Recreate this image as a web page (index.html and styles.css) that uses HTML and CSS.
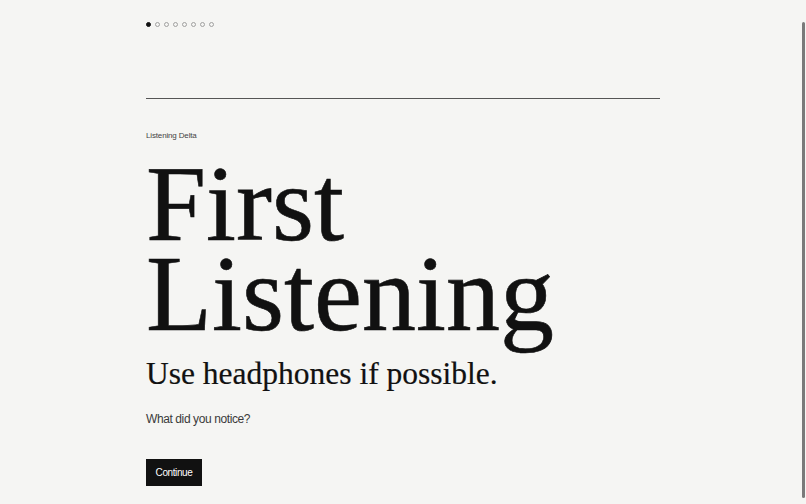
FILE: index.html
```html
<!DOCTYPE html>
<html lang="en">
<head>
<meta charset="utf-8">
<title>First Listening</title>
<link rel="stylesheet" href="styles.css">
</head>
<body>
<main class="page">
  <nav class="steps" aria-label="Progress">
    <span class="dot dot-active"></span>
    <span class="dot"></span>
    <span class="dot"></span>
    <span class="dot"></span>
    <span class="dot"></span>
    <span class="dot"></span>
    <span class="dot"></span>
    <span class="dot"></span>
  </nav>
  <hr class="rule">
  <p class="eyebrow">Listening Delta</p>
  <h1 class="title">First<br>Listening</h1>
  <p class="subtitle">Use headphones if possible.</p>
  <p class="prompt">What did you notice?</p>
  <button class="btn" type="button">Continue</button>
</main>
<div class="scroll-thumb" aria-hidden="true"></div>
</body>
</html>
```
FILE: styles.css
```css
html, body {
  margin: 0;
  padding: 0;
  background: #f5f5f3;
  color: #111;
}

body {
  font-family: "Liberation Sans", Arial, sans-serif;
  overflow: hidden;
  height: 504px;
}

.page {
  width: 514px;
  margin: 0 auto;
  padding-top: 22px;
  display: flex;
  flex-direction: column;
  align-items: flex-start;
}

.steps {
  display: flex;
  gap: 4px;
  height: 5px;
}

.dot {
  width: 5px;
  height: 5px;
  box-sizing: border-box;
  border-radius: 50%;
  border: 1px solid #a0a0a0;
}

.dot-active {
  background: #111;
  border-color: #111;
}

.rule {
  align-self: stretch;
  margin: 71px 0 0;
  border: 0;
  height: 1px;
  background: #555;
}

.eyebrow {
  margin: 31px 0 0;
  font-size: 8px;
  line-height: 12px;
  letter-spacing: -0.15px;
  color: #444;
}

.title {
  margin: 16.5px 0 0;
  font-family: "Liberation Serif", Georgia, serif;
  font-weight: 400;
  font-size: 108px;
  line-height: 90px;
  color: #111;
  -webkit-text-stroke: 0.6px #111;
}

.subtitle {
  margin: 16.5px 0 0;
  font-family: "Liberation Serif", Georgia, serif;
  font-size: 31.5px;
  line-height: 37px;
  color: #111;
  -webkit-text-stroke: 0.2px #111;
}

.prompt {
  margin: 18px 0 0;
  font-size: 12px;
  line-height: 18px;
  letter-spacing: -0.4px;
  color: #3a3a3a;
}

.btn {
  margin-top: 30.5px;
  height: 27px;
  width: 56px;
  padding: 0;
  border: 0;
  background: #111;
  color: #fff;
  font-family: "Liberation Sans", Arial, sans-serif;
  font-size: 10px;
  letter-spacing: -0.4px;
  cursor: pointer;
}

.scroll-thumb {
  position: fixed;
  top: 22px;
  right: 1px;
  width: 3px;
  height: 476px;
  background: #7a7a7a;
  border-radius: 2px;
}
```
